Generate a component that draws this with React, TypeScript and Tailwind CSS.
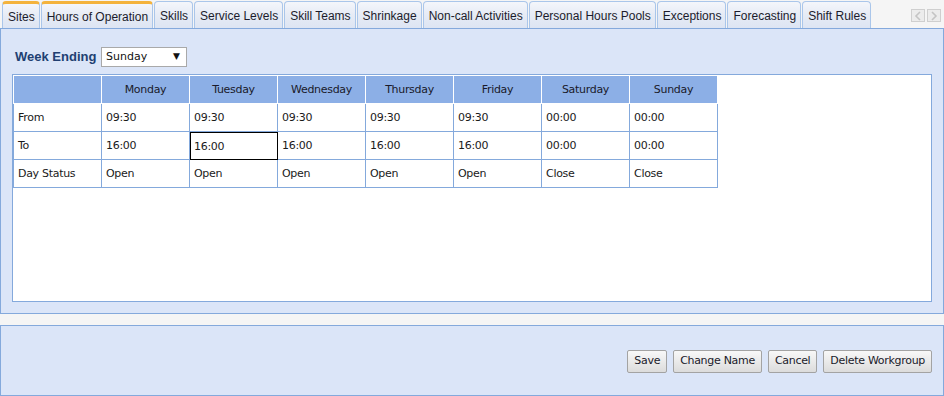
import { useState } from "react";

const tabs = [
  "Sites",
  "Hours of Operation",
  "Skills",
  "Service Levels",
  "Skill Teams",
  "Shrinkage",
  "Non-call Activities",
  "Personal Hours Pools",
  "Exceptions",
  "Forecasting",
  "Shift Rules",
];

const days = ["Monday", "Tuesday", "Wednesday", "Thursday", "Friday", "Saturday", "Sunday"];

const rows = [
  { label: "From", values: ["09:30", "09:30", "09:30", "09:30", "09:30", "00:00", "00:00"] },
  { label: "To", values: ["16:00", "16:00", "16:00", "16:00", "16:00", "00:00", "00:00"] },
  { label: "Day Status", values: ["Open", "Open", "Open", "Open", "Open", "Close", "Close"] },
];

export default function App() {
  const [selected] = useState({ row: 1, col: 1 });

  return (
    <div className="w-[944px] h-[396px] bg-[#f5f5f5] text-[12px] text-[#1a1a1a] font-['Liberation_Sans',Arial,sans-serif] overflow-hidden">
      {/* Tab strip */}
      <div className="flex items-end h-[28px] pl-[2px] relative">
        {tabs.map((t, i) => (
          <div
            key={t}
            className={`h-[27px] mr-[1px] pl-[5px] pr-[4px] flex items-center rounded-t-[4px] border border-b-0 border-[#aac6ea] bg-gradient-to-b from-[#f4f6fb] via-[#e6ebf5] to-[#dde5f3] whitespace-nowrap ${
              i < 2 ? "border-t-[3px] border-t-[#f4b33c]" : ""
            }`}
          >
            <span className="text-[#1c1c2c] pt-[2px]">{t}</span>
          </div>
        ))}
        {/* scroll arrows */}
        <div className="absolute right-[3px] top-[9px] flex gap-[2px]">
          <div className="w-[14px] h-[13px] border border-[#cfcfcf] bg-[#ececec] flex items-center justify-center">
            <svg width="8" height="10" viewBox="0 0 8 10">
              <path d="M6 1 L2 5 L6 9" fill="none" stroke="#c4c4c4" strokeWidth="1.6" />
            </svg>
          </div>
          <div className="w-[14px] h-[13px] border border-[#cfcfcf] bg-[#ececec] flex items-center justify-center">
            <svg width="8" height="10" viewBox="0 0 8 10">
              <path d="M2 1 L6 5 L2 9" fill="none" stroke="#c4c4c4" strokeWidth="1.6" />
            </svg>
          </div>
        </div>
      </div>

      {/* Main panel */}
      <div className="h-[286px] border border-[#84a9dc] bg-[#dbe5f8] px-[11px] pt-[18px]">
        <div className="flex items-center h-[20px] mb-[7px]">
          <span className="ml-[3px] font-bold text-[13px] text-[#213f72] w-[86px]">Week Ending</span>
          <div className="w-[86px] h-[20px] border border-[#a9a9a9] bg-white flex items-center justify-between pl-[4px] pr-[6px] font-['DejaVu_Sans',Verdana,sans-serif] text-[11px] text-[#111]">
            <span>Sunday</span>
            <span className="text-[9px]">▼</span>
          </div>
        </div>

        <div className="h-[228px] border border-[#84a9dc] bg-white">
          <table className="border-collapse table-fixed font-['DejaVu_Sans',Verdana,sans-serif] text-[11px] tracking-[-0.3px]">
            <colgroup>
              <col className="w-[88px]" />
              {days.map((d) => (
                <col key={d} className="w-[88px]" />
              ))}
            </colgroup>
            <thead>
              <tr className="h-[28px] bg-[#8cafe6]">
                <th className="border border-white p-0"></th>
                {days.map((d) => (
                  <th key={d} className="border border-white font-normal text-center text-[#1a1a2a] p-0 pt-[2px]">
                    {d}
                  </th>
                ))}
              </tr>
            </thead>
            <tbody>
              {rows.map((r, ri) => (
                <tr key={r.label} className="h-[28px]">
                  <td className="border border-[#84a9dc] px-[4px] pt-[2px] text-left">{r.label}</td>
                  {r.values.map((v, ci) => {
                    const sel = selected.row === ri && selected.col === ci;
                    return (
                      <td
                        key={ci}
                        className={`px-[4px] text-left border ${
                          sel ? "border-black outline outline-1 outline-black -outline-offset-1 pt-[4px]" : "border-[#84a9dc] pt-[2px]"
                        }`}
                      >
                        {v}
                      </td>
                    );
                  })}
                </tr>
              ))}
            </tbody>
          </table>
        </div>
      </div>

      {/* Bottom action panel */}
      <div className="mt-[11px] h-[71px] border border-[#84a9dc] bg-[#dbe5f8] flex items-center justify-end gap-[6px] pr-[11px] pt-[2px]">
        {["Save", "Change Name", "Cancel", "Delete Workgroup"].map((b) => (
          <button
            key={b}
            className="h-[23px] px-[6px] border border-[#a3a3a3] rounded-[2px] bg-gradient-to-b from-[#f8f8f8] to-[#dcdcdc] font-['DejaVu_Sans',Verdana,sans-serif] text-[11px] tracking-[-0.3px] text-[#1a1a2a]"
          >
            {b}
          </button>
        ))}
      </div>
    </div>
  );
}
